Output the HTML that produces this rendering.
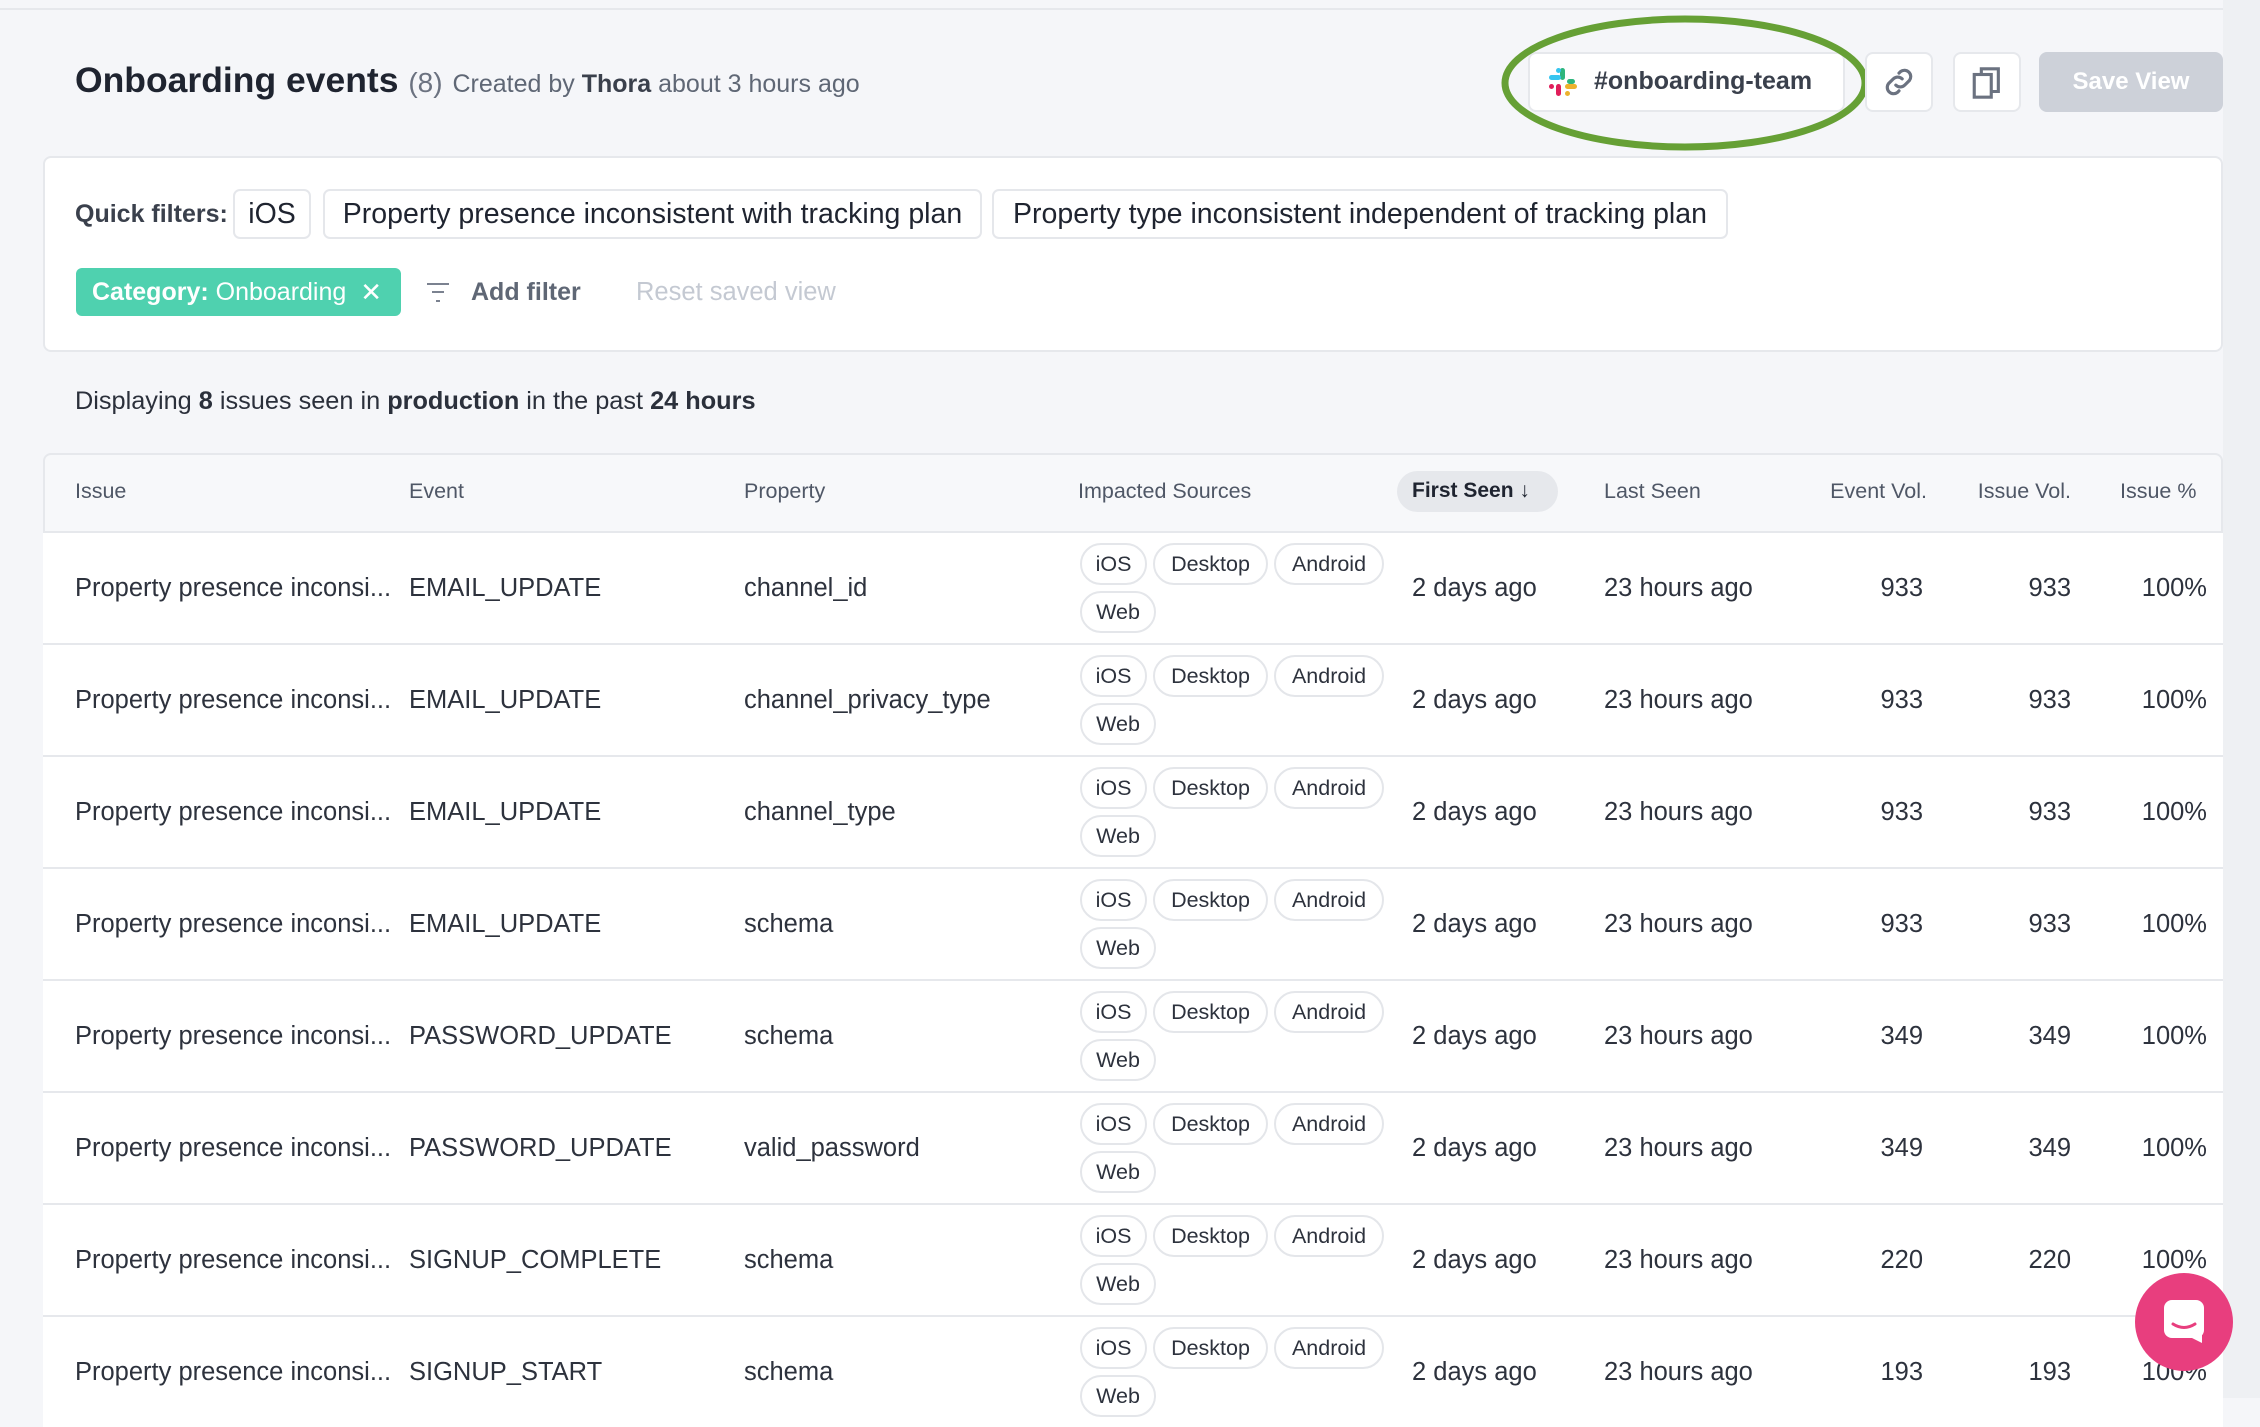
<!DOCTYPE html>
<html><head><meta charset="utf-8"><style>
*{box-sizing:border-box;margin:0;padding:0}
body{width:2260px;height:1398px;overflow:hidden;background:#f5f6f9;font-family:"Liberation Sans",sans-serif;color:#2b303b;position:relative}
.a{position:absolute;white-space:nowrap}
.btn{position:absolute;background:#fff;border:2px solid #e6e8ec;border-radius:8px}
.chip{position:absolute;border:2px solid #e5e7eb;border-radius:7px;background:#fff;font-size:28.5px;display:flex;align-items:center;justify-content:center;color:#1f2430;white-space:nowrap}
.th{position:absolute;top:479px;font-size:21.5px;color:#4f5766;white-space:nowrap}
.row{position:absolute;left:43px;width:2180px;height:112px;background:#fff;border-top:2px solid #e6e8ec}
.c{position:absolute;font-size:25.5px;color:#2d323d;white-space:nowrap;top:41px}
.r{text-align:right}
.s{position:absolute;height:42px;border:2px solid #e4e6ea;border-radius:21px;font-size:21.5px;display:flex;align-items:center;justify-content:center;color:#2d323d;background:#fff}
</style></head><body>
<div class="a" style="left:0;top:8px;width:2260px;height:2px;background:#e6e8ec"></div>
<div class="a" style="left:2223px;top:0;width:37px;height:1398px;background:#eef0f3"></div>

<div class="a" style="left:75px;top:60px;font-size:35.5px;font-weight:bold;color:#1f2430">Onboarding events <span style="font-weight:normal;color:#6b7280;font-size:28px">(8)</span> <span style="font-weight:normal;color:#5f6775;font-size:25px">Created by <b style="color:#3a404c">Thora</b> about 3 hours ago</span></div>

<div class="btn" style="left:1528px;top:52px;width:317px;height:60px"></div>
<svg class="a" style="left:1547px;top:66px" width="32" height="32" viewBox="0 0 32 32">
<rect x="13" y="2" width="5" height="12" rx="2.5" fill="#2eb67d"/><rect x="20" y="13" width="8" height="5" rx="2.5" fill="#2eb67d"/>
<rect x="2" y="9" width="12" height="5" rx="2.5" fill="#36c5f0"/><rect x="9" y="2" width="5" height="5" rx="2.5" fill="#36c5f0"/>
<rect x="9" y="18" width="5" height="12" rx="2.5" fill="#e01e5a"/><rect x="2" y="18" width="5" height="5" rx="2.5" fill="#e01e5a"/>
<rect x="18" y="18" width="12" height="5" rx="2.5" fill="#ecb22e"/><rect x="18" y="25" width="5" height="5" rx="2.5" fill="#ecb22e"/>
</svg>
<div class="a" style="left:1594px;top:67px;font-size:25px;font-weight:bold;color:#3a404c">#onboarding-team</div>
<svg class="a" style="left:1500px;top:14px" width="370" height="140"><ellipse cx="185" cy="69" rx="180" ry="64" fill="none" stroke="#66a035" stroke-width="7"/></svg>

<div class="btn" style="left:1865px;top:52px;width:68px;height:60px"></div>
<svg class="a" style="left:1880px;top:63px" width="38" height="38" viewBox="0 0 24 24" fill="none" stroke="#6b7280" stroke-width="2" stroke-linecap="round"><path d="M10 14a4 4 0 0 0 5.6 0l3-3a4 4 0 0 0-5.6-5.6l-1 1"/><path d="M14 10a4 4 0 0 0-5.6 0l-3 3a4 4 0 0 0 5.6 5.6l1-1"/></svg>
<div class="btn" style="left:1953px;top:52px;width:68px;height:60px"></div>
<svg class="a" style="left:1970px;top:64px" width="34" height="38" viewBox="0 0 24 26" fill="none" stroke="#6b7280" stroke-width="2.2"><rect x="3" y="7" width="12" height="16"/><path d="M8 7V3h12v16h-5"/></svg>
<div class="a" style="left:2039px;top:52px;width:184px;height:60px;background:#cdd1d9;border-radius:8px;color:#fff;font-size:24px;font-weight:bold;display:flex;align-items:center;justify-content:center">Save View</div>

<div class="a" style="left:43px;top:156px;width:2180px;height:196px;background:#fff;border:2px solid #e6e8ec;border-radius:8px"></div>
<div class="a" style="left:75px;top:200px;font-size:25px;font-weight:bold;color:#3a404c">Quick filters:</div>
<div class="chip" style="left:233px;top:189px;width:78px;height:50px">iOS</div>
<div class="chip" style="left:323px;top:189px;width:659px;height:50px">Property presence inconsistent with tracking plan</div>
<div class="chip" style="left:992px;top:189px;width:736px;height:50px">Property type inconsistent independent of tracking plan</div>
<div class="a" style="left:76px;top:268px;width:325px;height:48px;background:#4fd1af;border-radius:6px;color:#fff;font-size:25px;display:flex;align-items:center;padding-left:16px"><b>Category:</b>&nbsp;Onboarding<span style="margin-left:14px;font-size:26px">✕</span></div>
<svg class="a" style="left:425px;top:280px" width="26" height="26" viewBox="0 0 26 26" stroke="#7b8290" stroke-width="2"><path d="M2 4h22M7 12h12M11 21h4"/></svg>
<div class="a" style="left:471px;top:278px;font-size:25px;font-weight:bold;color:#5f6775">Add filter</div>
<div class="a" style="left:636px;top:278px;font-size:25.5px;color:#c4c9d2">Reset saved view</div>

<div class="a" style="left:75px;top:387px;font-size:25.3px;color:#2b303b">Displaying <b>8</b> issues seen in <b>production</b> in the past <b>24 hours</b></div>

<div class="a" style="left:43px;top:453px;width:2180px;height:80px;background:#f7f8fa;border:2px solid #e6e8ec;border-bottom:none;border-radius:8px 8px 0 0"></div>
<div class="th" style="left:75px">Issue</div>
<div class="th" style="left:409px">Event</div>
<div class="th" style="left:744px">Property</div>
<div class="th" style="left:1078px">Impacted Sources</div>
<div class="a" style="left:1397px;top:471px;width:161px;height:41px;border-radius:21px;background:#e6e8ec"></div>
<div class="th" style="left:1412px;color:#1f2430;font-weight:bold;font-size:21px">First Seen ↓</div>
<div class="th" style="left:1604px">Last Seen</div>
<div class="th" style="left:1807px;width:120px;text-align:right">Event Vol.</div>
<div class="th" style="left:1951px;width:120px;text-align:right">Issue Vol.</div>
<div class="th" style="left:2120px">Issue %</div>

<div id="rows"></div>
<script>
var d=[["EMAIL_UPDATE","channel_id","933"],["EMAIL_UPDATE","channel_privacy_type","933"],["EMAIL_UPDATE","channel_type","933"],["EMAIL_UPDATE","schema","933"],["PASSWORD_UPDATE","schema","349"],["PASSWORD_UPDATE","valid_password","349"],["SIGNUP_COMPLETE","schema","220"],["SIGNUP_START","schema","193"]];
var h="";d.forEach(function(r,i){var t=531+i*112;
h+='<div class="row" style="top:'+t+'px">'+
'<div class="c" style="left:32px">Property presence inconsi...</div>'+
'<div class="c" style="left:366px">'+r[0]+'</div>'+
'<div class="c" style="left:701px">'+r[1]+'</div>'+
'<div class="s" style="left:1037px;top:10px;width:67px">iOS</div>'+
'<div class="s" style="left:1110px;top:10px;width:115px">Desktop</div>'+
'<div class="s" style="left:1231px;top:10px;width:110px">Android</div>'+
'<div class="s" style="left:1037px;top:58px;width:76px">Web</div>'+
'<div class="c" style="left:1369px">2 days ago</div>'+
'<div class="c" style="left:1561px">23 hours ago</div>'+
'<div class="c r" style="left:1780px;width:100px">'+r[2]+'</div>'+
'<div class="c r" style="left:1928px;width:100px">'+r[2]+'</div>'+
'<div class="c r" style="left:2064px;width:100px">100%</div></div>';});
document.getElementById("rows").innerHTML=h;
</script>

<div class="a" style="left:2135px;top:1273px;width:98px;height:98px;border-radius:50%;background:#e83e7e"></div>
<svg class="a" style="left:2162px;top:1298px" width="44" height="46" viewBox="0 0 44 46"><rect x="2" y="2" width="40" height="38" rx="8" fill="#fff"/><path d="M30 40l10 5V36z" fill="#fff"/><path d="M11 26q11 7 22 0" stroke="#e83e7e" stroke-width="3" fill="none" stroke-linecap="round"/></svg>
</body></html>
